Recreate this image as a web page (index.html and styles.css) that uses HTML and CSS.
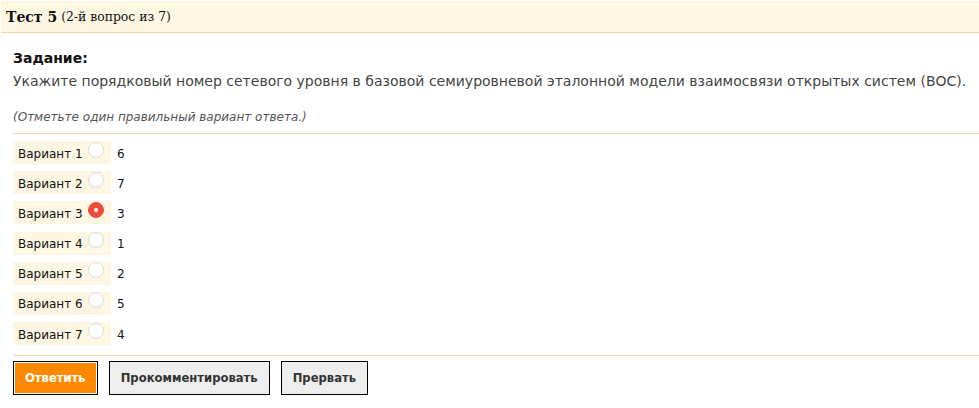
FILE: index.html
```html
<!DOCTYPE html>
<html lang="ru">
<head>
<meta charset="utf-8">
<title>Тест 5</title>
<link rel="stylesheet" href="styles.css">
</head>
<body>
<div class="header">
  <span class="title">Тест 5</span> <span class="sub">(2-й вопрос из 7)</span>
</div>
<div class="content">
  <div class="task-label">Задание:</div>
  <div class="question">Укажите порядковый номер сетевого уровня в базовой семиуровневой эталонной модели взаимосвязи открытых систем (ВОС).</div>
  <div class="hint">(Отметьте один правильный вариант ответа.)</div>
  <div class="options">
    <div class="opt"><label class="lbl">Вариант 1 <span class="radio"></span></label><span class="ans">6</span></div>
    <div class="opt"><label class="lbl">Вариант 2 <span class="radio"></span></label><span class="ans">7</span></div>
    <div class="opt"><label class="lbl">Вариант 3 <span class="radio checked"></span></label><span class="ans">3</span></div>
    <div class="opt"><label class="lbl">Вариант 4 <span class="radio"></span></label><span class="ans">1</span></div>
    <div class="opt"><label class="lbl">Вариант 5 <span class="radio"></span></label><span class="ans">2</span></div>
    <div class="opt"><label class="lbl">Вариант 6 <span class="radio"></span></label><span class="ans">5</span></div>
    <div class="opt"><label class="lbl">Вариант 7 <span class="radio"></span></label><span class="ans">4</span></div>
  </div>
  <div class="buttons">
    <button class="btn primary">Ответить</button>
    <button class="btn">Прокомментировать</button>
    <button class="btn">Прервать</button>
  </div>
</div>
</body>
</html>
```
FILE: styles.css
```css
html, body {
  margin: 0;
  padding: 0;
  background: #fff;
}
body {
  padding-top: 1px;
  padding-left: 1px;
  font-family: "DejaVu Sans", sans-serif;
}
.header {
  background: #fdf6e3;
  border-bottom: 1px solid #e9d9a6;
  height: 31px;
  padding-left: 5px;
  display: flex;
  align-items: center;
  gap: 4px;
  font-family: "DejaVu Serif", serif;
  color: #111;
}
.title {
  font-weight: bold;
  font-size: 14px;
}
.sub {
  font-size: 12.4px;
}
.content {
  padding: 16px 0 0 12px;
}
.task-label {
  font-weight: bold;
  font-size: 14px;
  color: #111;
  line-height: 18px;
}
.question {
  margin-top: 5px;
  font-size: 14px;
  color: #444;
  line-height: 18px;
}
.hint {
  margin-top: 20px;
  font-size: 12px;
  font-style: italic;
  color: #555;
  line-height: 15px;
  padding-bottom: 8px;
  border-bottom: 1px solid #e9d9a6;
}
.options {
  padding-top: 7px;
  display: flex;
  flex-direction: column;
  gap: 7.2px;
  padding-bottom: 10px;
  border-bottom: 1px solid #e9d9a6;
}
.opt {
  display: flex;
  align-items: center;
  height: 23px;
}
.lbl {
  background: #fdf6e3;
  width: 93px;
  height: 23px;
  padding-left: 5px;
  padding-top: 2px;
  box-sizing: content-box;
  height: 21px;
  display: flex;
  align-items: center;
  font-size: 12px;
  color: #111;
  gap: 5px;
}
.radio {
  width: 14px;
  height: 14px;
  border: 1px solid #dcdcdc;
  border-radius: 50%;
  background: #fff;
  margin-top: -8px;
  box-sizing: content-box;
}
.radio.checked {
  background: #e74c3c;
  border-color: #e74c3c;
  position: relative;
}
.radio.checked::after {
  content: "";
  position: absolute;
  left: 5px;
  top: 5px;
  width: 4px;
  height: 4px;
  background: #fff;
  border-radius: 50%;
}
.ans {
  margin-left: 6px;
  margin-top: 2px;
  font-size: 12px;
  color: #111;
}
.buttons {
  display: flex;
  gap: 11px;
  padding-top: 5px;
}
.btn {
  height: 34px;
  border: 1px solid #000;
  background: #eeeeee;
  font-family: "DejaVu Sans", sans-serif;
  font-weight: bold;
  font-size: 11.6px;
  color: #333;
  padding: 0 11px;
  border-radius: 0;
}
.btn.primary {
  background: #ff8a00;
  color: #fff;
  box-shadow: inset 0 0 0 1px #fff;
}
```
